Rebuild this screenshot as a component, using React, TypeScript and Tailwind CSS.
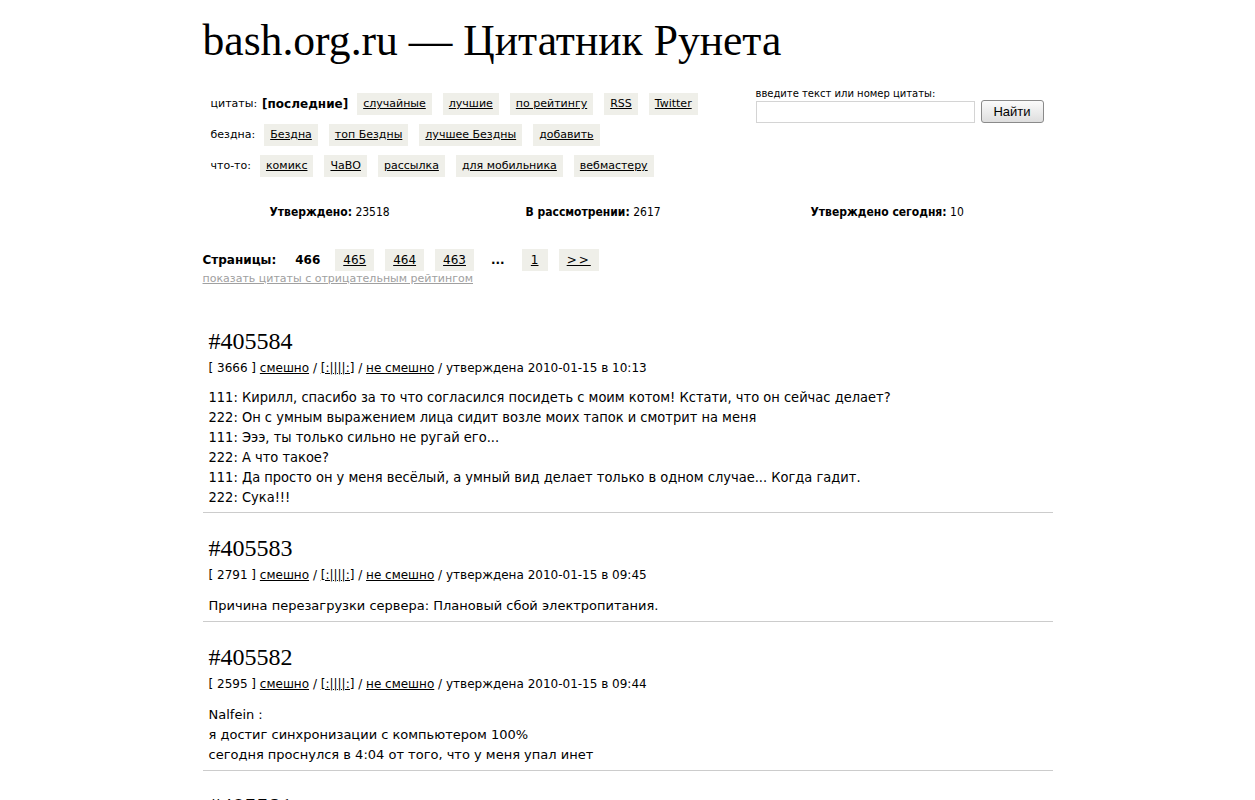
import React from "react";

const verdana = "font-['DejaVu_Sans',Verdana,sans-serif]";

type Quote = {
  id: string;
  rating: string;
  date: string;
  lines: string[];
  narrow?: boolean;
};

const quotes: Quote[] = [
  {
    id: "#405584",
    rating: "3666",
    date: "2010-01-15 в 10:13",
    narrow: true,
    lines: [
      "111: Кирилл, спасибо за то что согласился посидеть с моим котом! Кстати, что он сейчас делает?",
      "222: Он с умным выражением лица сидит возле моих тапок и смотрит на меня",
      "111: Эээ, ты только сильно не ругай его...",
      "222: А что такое?",
      "111: Да просто он у меня весёлый, а умный вид делает только в одном случае... Когда гадит.",
      "222: Сука!!!",
    ],
  },
  {
    id: "#405583",
    rating: "2791",
    date: "2010-01-15 в 09:45",
    lines: ["Причина перезагрузки сервера: Плановый сбой электропитания."],
  },
  {
    id: "#405582",
    rating: "2595",
    date: "2010-01-15 в 09:44",
    lines: [
      "Nalfein :",
      "я достиг синхронизации с компьютером 100%",
      "сегодня проснулся в 4:04 от того, что у меня упал инет",
    ],
  },
  {
    id: "#405581",
    rating: "2410",
    date: "2010-01-15 в 09:30",
    lines: ["..."],
  },
];

function Btn({ children }: { children: React.ReactNode }) {
  return (
    <a className="inline-block h-[22px] bg-[#efefe9] px-[6px] leading-[22px] text-black underline">
      {children}
    </a>
  );
}

function NavRow({ label, children }: { label: React.ReactNode; children: React.ReactNode }) {
  return (
    <div className="flex h-[22px] items-center">
      <span className="mr-[9px]">{label}</span>
      <div className="flex items-center gap-[11px]">{children}</div>
    </div>
  );
}

function PageBox({ children }: { children: React.ReactNode }) {
  return (
    <a className="inline-block h-[22px] min-w-[26px] bg-[#efefe9] px-[8px] text-center leading-[22px] text-black underline">
      {children}
    </a>
  );
}

export default function App() {
  return (
    <div className={`min-h-screen bg-white text-black ${verdana}`}>
      <div className="mx-auto w-[850px] pt-[15px]">
        {/* Header */}
        <h1 className="font-['Liberation_Serif','Times_New_Roman',serif] text-[43.6px] leading-[50px] font-normal">
          bash.org.ru — Цитатник Рунета
        </h1>

        {/* Menu + search */}
        <div className="mt-[28px] flex text-[11px]">
          <div className="flex w-[553px] flex-col gap-[9px] pl-2">
            <NavRow label="цитаты:">
              <b className="-ml-[4px] -mr-[2px] text-[12px]">[последние]</b>
              <Btn>случайные</Btn>
              <Btn>лучшие</Btn>
              <Btn>по рейтингу</Btn>
              <Btn>RSS</Btn>
              <Btn>Twitter</Btn>
            </NavRow>
            <NavRow label="бездна:">
              <Btn>Бездна</Btn>
              <Btn>топ Бездны</Btn>
              <Btn>лучшее Бездны</Btn>
              <Btn>добавить</Btn>
            </NavRow>
            <NavRow label="что-то:">
              <Btn>комикс</Btn>
              <Btn>ЧаВО</Btn>
              <Btn>рассылка</Btn>
              <Btn>для мобильника</Btn>
              <Btn>вебмастеру</Btn>
            </NavRow>
          </div>
          <div className="-mt-[6px] flex flex-col">
            <label className="text-[10px] leading-[13px]">введите текст или номер цитаты:</label>
            <div className="flex items-center gap-[6px]">
              <input className="h-[22px] w-[219px] border border-[#d4d4d4] bg-white px-1 text-[12px] outline-none" />
              <button className="h-[23px] w-[63px] rounded-[3px] border border-[#8a8a8a] bg-gradient-to-b from-[#fbfbfb] to-[#dedede] font-['Liberation_Sans',Arial,sans-serif] text-[13px] text-black">
                Найти
              </button>
            </div>
          </div>
        </div>

        {/* Stats */}
        <div className="mt-[28px] grid grid-cols-[256px_285px_1fr] pl-[67px] text-[12px] leading-[14px] font-stretch-condensed">
          <div>
            <b>Утверждено:</b> 23518
          </div>
          <div>
            <b>В рассмотрении:</b> 2617
          </div>
          <div>
            <b>Утверждено сегодня:</b> 10
          </div>
        </div>

        {/* Pages */}
        <div className="mt-[30px] flex h-[22px] items-center text-[12px]">
          <b className="mr-[19px]">Страницы:</b>
          <b className="mr-[15px]">466</b>
          <div className="flex items-center gap-[11px]">
            <PageBox>465</PageBox>
            <PageBox>464</PageBox>
            <PageBox>463</PageBox>
            <b className="mx-[6px]">...</b>
            <PageBox>1</PageBox>
            <PageBox>
              <span className="tracking-[2px]">&gt;&gt;</span>
            </PageBox>
          </div>
        </div>
        <a className="block text-[11px] leading-[15px] text-[#a0a0a0] underline">
          показать цитаты с отрицательным рейтингом
        </a>

        {/* Quotes */}
        <div className="mt-[38px]">
          {quotes.map((q) => (
            <div key={q.id} className="border-b border-[#cccccc] pb-[5px] pl-[6px] pt-[2px] [&+&]:pt-[20px]">
              <div className="font-['Liberation_Serif',Georgia,serif] text-[24px] leading-[30px]">{q.id}</div>
              <div className="mt-[4px] text-[12px] leading-[16px]">
                [ {q.rating} ] <a className="underline">смешно</a> / <a className="underline">[:||||:]</a> /{" "}
                <a className="underline">не смешно</a> / утверждена {q.date}
              </div>
              <div
                className={`leading-[20px] ${q.narrow ? "mt-[11px] text-[14.5px] font-stretch-condensed" : "mt-[13px] text-[13px]"}`}
              >
                {q.lines.map((l, i) => (
                  <div key={i}>{l}</div>
                ))}
              </div>
            </div>
          ))}
        </div>
      </div>
    </div>
  );
}
